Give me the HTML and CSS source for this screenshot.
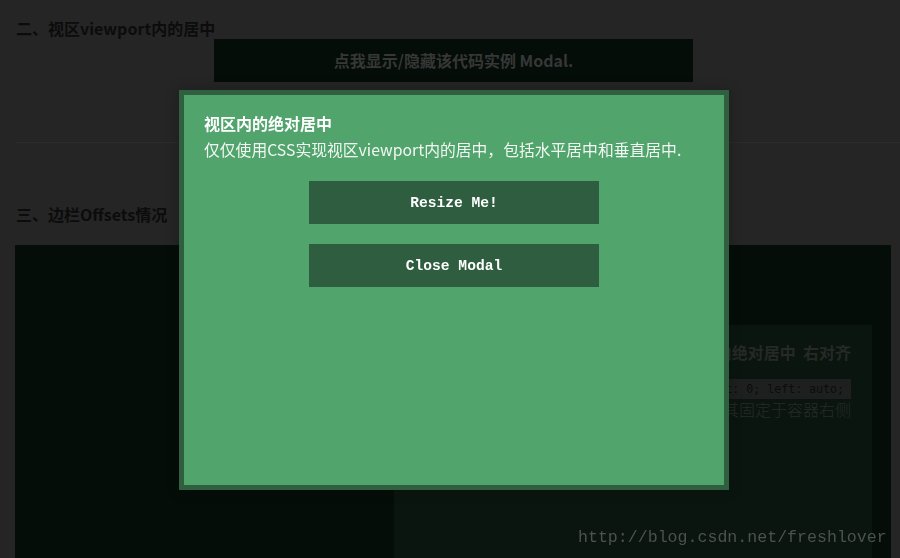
FILE: index.html
```html
<!DOCTYPE html>
<html lang="zh">
<head>
<meta charset="utf-8">
<title>视区内的绝对居中</title>
<link rel="stylesheet" href="styles.css">
</head>
<body>
<div class="page">
  <h2 class="sec sec-first">二、视区viewport内的居中</h2>
  <div class="toggle-btn">点我显示/隐藏该代码实例 Modal.</div>
  <hr class="divider">
  <h2 class="sec sec-second">三、边栏Offsets情况</h2>
  <div class="demo">
    <div class="demo-box">
      <h3 class="demo-title">边栏Offsets情况下的容器内绝对居中&nbsp;&nbsp;右对齐</h3>
      <div class="demo-code"><code>.Absolute-Center.is-Right { right: 0; left: auto;</code></div>
      <p class="demo-text">设置 right: 0; left: auto; 使其固定于容器右侧</p>
    </div>
  </div>
</div>

<div class="modal">
  <h3 class="modal-title">视区内的绝对居中</h3>
  <p class="modal-text">仅仅使用CSS实现视区viewport内的居中，包括水平居中和垂直居中.</p>
  <div class="modal-actions">
    <button class="modal-btn">Resize Me!</button>
    <button class="modal-btn">Close Modal</button>
  </div>
</div>

<div class="watermark">http://blog.csdn.net/freshlover</div>
</body>
</html>
```

FILE: styles.css
```css
html, body {
  margin: 0;
  padding: 0;
  height: 100%;
  overflow: hidden;
}

body {
  background: #252525;
  font-family: "Noto Sans CJK SC", "Noto Sans", sans-serif;
  color: #0d0d0d;
}

.page {
  padding: 0 9px 0 15px;
}

.sec {
  margin: 0;
  padding-left: 1px;
  font-size: 16px;
  line-height: 20px;
  font-weight: 700;
  color: #0c0c0c;
}

.sec-first {
  padding-top: 18px;
}

.toggle-btn {
  margin: 1px 0 0 199px;
  width: 479px;
  height: 43px;
  background: #050d09;
  color: #363736;
  font-size: 16px;
  font-weight: 700;
  line-height: 43px;
  text-align: center;
}

.divider {
  margin: 60px -9px 0 0;
  border: 0;
  height: 1px;
  background: #2b2b2b;
}

.sec-second {
  margin-top: 61px;
}

.demo {
  margin-top: 21px;
  height: 340px;
  background: #050d09;
  padding-top: 80px;
  box-sizing: border-box;
}

.demo-box {
  margin-left: 379px;
  width: 478px;
  height: 260px;
  background: #0b150f;
  box-sizing: border-box;
  padding: 17px 21px 0 0;
  text-align: right;
  overflow: hidden;
  white-space: nowrap;
}

.demo-title {
  margin: 0;
  font-size: 16px;
  line-height: 20px;
  font-weight: 700;
  color: #262927;
}

.demo-code {
  margin-top: 17px;
  height: 20px;
  line-height: 20px;
}

.demo-code code {
  display: inline-block;
  vertical-align: top;
  height: 20px;
  line-height: 20px;
  padding: 0 7px 0 4px;
  background: #1e201f;
  color: #0b0c0b;
  font-family: "DejaVu Sans Mono", monospace;
  font-size: 11.6px;
}

.demo-text {
  margin: 0;
  font-size: 16px;
  line-height: 20px;
  font-weight: 300;
  color: #262b27;
}

.modal {
  position: fixed;
  left: 179px;
  top: 90px;
  width: 500px;
  height: 372px;
  border: 5px solid #2f5f3f;
  background: #50a46c;
  padding: 18px 20px 0;
  box-sizing: content-box;
  box-shadow: 0 0 12px rgba(0, 0, 0, 0.25);
}

.modal-title {
  margin: 0;
  font-size: 16px;
  line-height: 20px;
  font-weight: 700;
  color: #ffffff;
}

.modal-text {
  margin: 7px 0 0;
  font-size: 15.8px;
  line-height: 20px;
  color: #f2f7f3;
  white-space: nowrap;
}

.modal-actions {
  margin-top: 21px;
  display: flex;
  flex-direction: column;
  align-items: center;
  gap: 20px;
}

.modal-btn {
  width: 290px;
  height: 43px;
  border: 0;
  padding: 0;
  background: #2e5e3f;
  color: #ffffff;
  font-family: "Liberation Mono", monospace;
  font-weight: 700;
  font-size: 14.6px;
}

.watermark {
  position: fixed;
  left: 578px;
  top: 527px;
  font-family: "Liberation Mono", monospace;
  font-size: 16.6px;
  line-height: 22px;
  color: #4c524e;
}
```
